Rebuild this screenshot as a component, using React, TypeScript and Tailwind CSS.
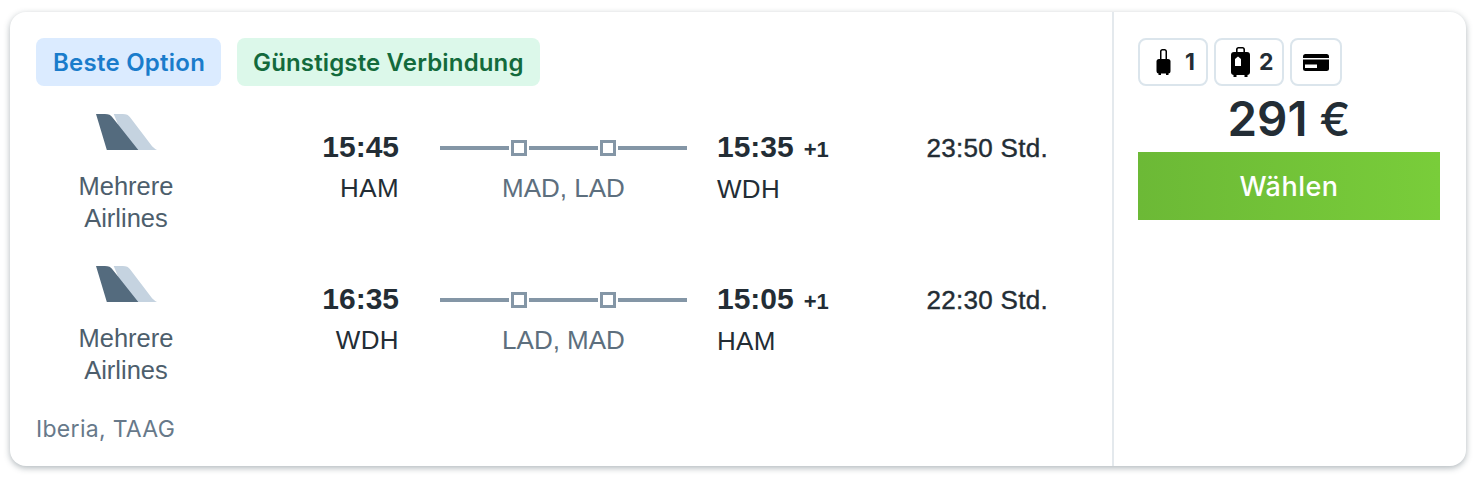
const SANS = "font-['Liberation_Sans',Arial,sans-serif]";
const INTER = "font-['Inter',sans-serif]";

const ROWS = [
  { dep: "15:45", from: "HAM", stops: "MAD, LAD", arr: "15:35", to: "WDH", dur: "23:50 Std." },
  { dep: "16:35", from: "WDH", stops: "LAD, MAD", arr: "15:05", to: "HAM", dur: "22:30 Std." },
];

function TailLogo() {
  return (
    <svg width="61" height="36" viewBox="0 0 62 38" preserveAspectRatio="none" className="block">
      <path d="M18 0h9c4 0 6 1 8 4l22 30c1.500 1.500 3 3 5 4H33Z" fill="#c5d3e0" />
      <path d="M0 0h9c4 0 6 1 8 4l26 34H11Z" fill="#546b7e" />
    </svg>
  );
}

function StopLine() {
  return (
    <div className="flex w-[247px] items-center">
      <div className="h-1 w-[69px] bg-[#8496a6]" />
      <div className="mx-[2px] h-4 w-4 shrink-0 border-[3px] border-[#8496a6] bg-white" />
      <div className="h-1 flex-1 bg-[#8496a6]" />
      <div className="mx-[2px] h-4 w-4 shrink-0 border-[3px] border-[#8496a6] bg-white" />
      <div className="h-1 w-[69px] bg-[#8496a6]" />
    </div>
  );
}

function Row({ dep, from, stops, arr, to, dur }: (typeof ROWS)[number]) {
  return (
    <div className={`flex h-[152px] items-start ${SANS}`}>
      {/* Airline */}
      <div className="flex w-[180px] shrink-0 flex-col items-center pt-[9px]">
        <div className="pl-[1px]">
          <TailLogo />
        </div>
        <div className="mt-[20px] text-center text-[25.500px] leading-[32px] text-[#4d5e6c]">
          Mehrere
          <br />
          Airlines
        </div>
      </div>

      {/* Departure */}
      <div className="mt-[24px] w-[183px] shrink-0 text-right">
        <div className="text-[30px] leading-[36px] font-bold text-[#232d35]">{dep}</div>
        <div className="mt-[5px] text-[26px] leading-[36px] tracking-[0.4px] text-[#232d35]">{from}</div>
      </div>

      {/* Stops */}
      <div className="ml-[41px] mt-[24px] w-[247px] shrink-0">
        <div className="flex h-[36px] items-center pt-[2px]">
          <StopLine />
        </div>
        <div className="mt-[5px] text-center text-[26px] leading-[36px] text-[#5d6f7e]">{stops}</div>
      </div>

      {/* Arrival */}
      <div className="ml-[30px] mt-[24px] w-[170px] shrink-0">
        <div className="flex h-[36px] items-baseline">
          <span className="text-[30px] leading-[36px] font-bold text-[#232d35]">{arr}</span>
          <span className="ml-[10px] text-[22px] leading-[36px] font-bold text-[#232d35]">+1</span>
        </div>
        <div className="mt-[6px] text-[26px] leading-[36px] tracking-[0.3px] text-[#232d35]">{to}</div>
      </div>

      {/* Duration */}
      <div className="mt-[25px] w-[161px] shrink-0 text-right text-[26px] leading-[36px] tracking-[0.3px] text-[#232d35] [-webkit-text-stroke:0.4px_#232d35]">
        {dur}
      </div>
    </div>
  );
}

function SmallBag() {
  return (
    <svg width="15" height="26" viewBox="0 0 15 26" className="block">
      <path
        d="M4 11V2.500C4 1 5 0 6.500 0h2C10 0 11 1 11 2.500V11H9.500V2.800c0-.8-.4-1.300-1.200-1.300H6.700c-.8 0-1.200.5-1.200 1.300V11Z"
        fill="#000"
      />
      <rect x="0.500" y="10" width="14" height="14.500" rx="2.500" fill="#000" />
      <rect x="2.500" y="24" width="2.500" height="2" fill="#000" />
      <rect x="10" y="24" width="2.500" height="2" fill="#000" />
    </svg>
  );
}

function BigBag() {
  return (
    <svg width="19" height="30" viewBox="0 0 19 30" className="block">
      <path d="M5 7V2.500C5 1 6 0 7.500 0h4C13 0 14 1 14 2.500V7h-1.600V2.800c0-.8-.4-1.200-1.200-1.200H7.800c-.8 0-1.200.4-1.200 1.200V7Z" fill="#000" />
      <rect x="0" y="5" width="19" height="23" rx="3" fill="#000" />
      <rect x="2.500" y="27" width="3" height="3" fill="#000" />
      <rect x="13.500" y="27" width="3" height="3" fill="#000" />
      <path d="M4 12 7 9.500 10 12V19H4Z" fill="#fff" />
    </svg>
  );
}

function CardIcon() {
  return (
    <svg width="26" height="17" viewBox="0 0 26 17" className="block">
      <rect width="26" height="17" rx="2.500" fill="#000" />
      <rect x="0" y="4" width="26" height="1.500" fill="#fff" />
      <rect x="2" y="10.500" width="12" height="3.500" fill="#fff" />
    </svg>
  );
}

function Chip({ children, className }: { children: React.ReactNode; className: string }) {
  return (
    <div className={`flex h-12 items-center rounded-lg border-2 border-[#dbe5ec] ${className}`}>
      {children}
    </div>
  );
}

export default function App() {
  return (
    <div className="h-[482px] w-[1484px] bg-white pl-[10px] pt-[12px]">
      <div className="flex h-[454px] w-[1456px] overflow-hidden rounded-2xl bg-white shadow-[0_2px_6px_rgba(30,50,60,0.35)]">
        {/* ── Itinerary ── */}
        <div className="flex w-[1104px] shrink-0 flex-col border-r-2 border-[#e4e9ed] pl-[26px] pt-[26px]">
          <div className={`flex gap-4 text-[24px] leading-[50px] font-semibold ${INTER}`}>
            <span className="h-12 w-[185px] rounded-lg bg-[#dbebff] pl-[17px] tracking-[0.25px] text-[#1a7ccb]">Beste Option</span>
            <span className="h-12 w-[303px] rounded-lg bg-[#dcf8ea] pl-4 tracking-[0.15px] text-[#136a3c]">Günstigste Verbindung</span>
          </div>
          <div className="mt-[19px]">
            {ROWS.map((r) => (
              <Row key={r.dep} {...r} />
            ))}
          </div>
          <div className={`mt-[4px] text-[23px] leading-[32px] tracking-[0.3px] text-[#67798a] ${INTER}`}>
            Iberia, TAAG
          </div>
        </div>

        {/* ── Price ── */}
        <div className="flex-1 pl-[24px] pt-[26px]">
          <div className={`flex gap-[6px] text-[23px] font-bold text-[#232d35] ${INTER}`}>
            <Chip className="w-[70px] gap-[14px] pl-[16px]">
              <SmallBag />
              <span>1</span>
            </Chip>
            <Chip className="w-[70px] gap-[9px] pl-[15px]">
              <BigBag />
              <span>2</span>
            </Chip>
            <Chip className="w-[52px] justify-center">
              <CardIcon />
            </Chip>
          </div>
          <div className={`mt-[5px] flex w-[302px] items-baseline justify-center text-[46px] leading-[56px] font-semibold text-[#232d35] ${INTER}`}>
            <span className="text-[47.500px]">291</span>
            <span className="ml-[12px] font-medium">€</span>
          </div>
          <button
            className={`mt-[5px] h-[68px] w-[302px] bg-linear-to-r from-[#6cb936] to-[#79cd3a] pt-[3px] text-[27px] font-medium tracking-[0.5px] text-white ${INTER}`}
          >
            Wählen
          </button>
        </div>
      </div>
    </div>
  );
}
